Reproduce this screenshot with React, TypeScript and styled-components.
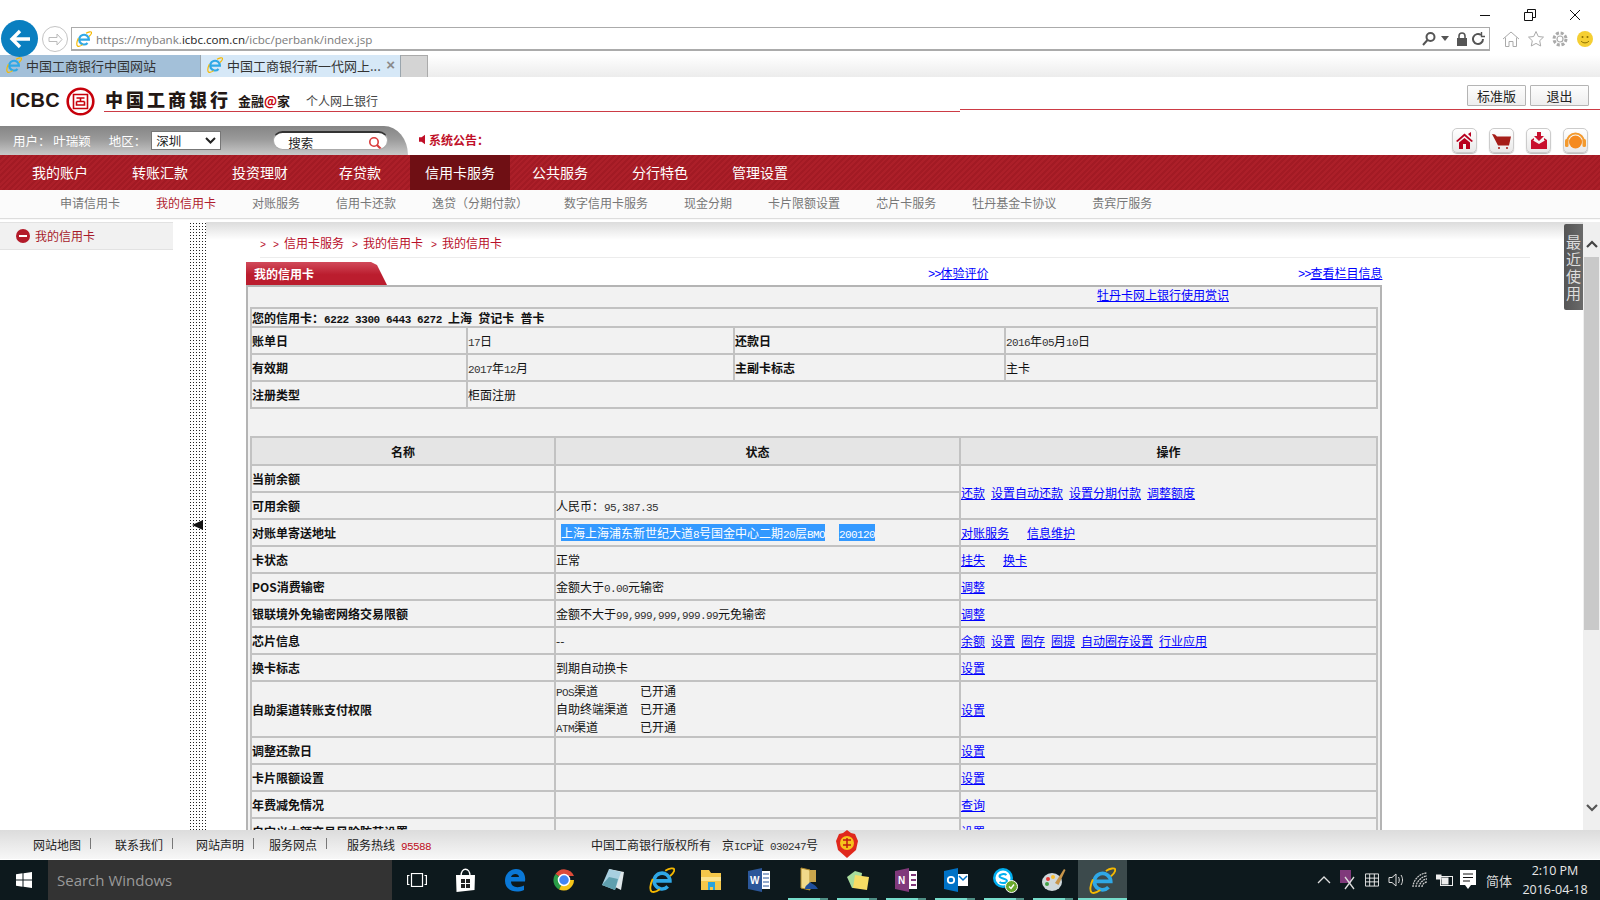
import React from "react";
import styled, { createGlobalStyle } from "styled-components";

const Global = createGlobalStyle`
  html, body { margin: 0; padding: 0; background: #fff; }
  body { font-family: "Noto Sans CJK SC", "Liberation Sans", sans-serif; font-size: 12px; }
  * { box-sizing: border-box; }
`;
const CJK = `"Noto Sans CJK SC", "Liberation Sans", sans-serif`;

const Page = styled.div`width:1600px;height:900px;overflow:hidden;display:flex;flex-direction:column;position:relative;background:#fff;`;

/* browser chrome */
const Chrome = styled.div`height:77px;flex:none;position:relative;background:#fff;`;
const WinControls = styled.div`height:27px;display:flex;justify-content:flex-end;align-items:center;padding:2px 19px 0 0;gap:33px;`;
const AddressRow = styled.div`height:28px;display:flex;align-items:flex-start;`;
const BackBtn = styled.div`position:absolute;left:1px;top:20px;width:37px;height:37px;border-radius:50%;background:#0a7fc0;display:flex;align-items:center;justify-content:center;z-index:2;`;
const FwdBtn = styled.div`width:26px;height:26px;border-radius:50%;border:1px solid #c4c4c4;margin:-1px 3px 0 42px;flex:none;display:flex;align-items:center;justify-content:center;`;
const Address = styled.div`width:1419px;height:24px;border:1px solid #ababab;border-width:1px 1px 2px 1px;display:flex;align-items:center;padding-left:4px;flex:none;position:relative;`;
const Url = styled.span`font:11.6px "Open Sans","Liberation Sans",sans-serif;color:#7b7b7b;margin:2px 0 0 4px;`;
const UrlDark = styled.b`font-weight:400;color:#222;`;
const AddrTools = styled.div`margin-left:auto;display:flex;align-items:center;gap:4px;padding-right:4px;`;
const BrowserTools = styled.div`display:flex;gap:6.5px;margin-left:12px;align-items:center;height:24px;`;
const TabStrip = styled.div`height:22px;display:flex;background:linear-gradient(#fff,#ececec);`;
const Tab = styled.div<{ $active?: boolean }>`width:${p => p.$active ? 200 : 201}px;height:22px;background:${p => p.$active ? "#d6e8f7" : "#a3c0d9"};border-right:1px solid #9aa5ad;display:flex;align-items:center;gap:4px;padding:0 0 2px 6px;font-size:13px;color:#333;position:relative;`;
const TabClose = styled.span`position:absolute;right:5px;top:1px;font:bold 15px "Liberation Sans",sans-serif;color:#8a8a8a;`;
const NewTab = styled.div`width:27px;height:22px;background:#d4d4d4;border-right:1px solid #aaa;border-top:1px solid #aaa;`;

/* site header */
const Header = styled.header`height:49px;flex:none;display:flex;align-items:flex-start;position:relative;padding-left:10px;`;
const IcbcWord = styled.span`font:bold 20px "Liberation Sans",sans-serif;color:#231815;margin-top:12px;letter-spacing:.3px;width:56px;`;
const LogoMark = styled.svg`flex:none;margin-top:10px;`;
const BankName = styled.span`font:900 18px ${CJK};letter-spacing:3px;color:#231815;margin:8px 0 0 10px;line-height:28px;width:133px;white-space:nowrap;`;
const Jinrong = styled.span`font:bold 13px ${CJK};color:#231815;margin:15px 0 0 0;line-height:18px;width:68px;white-space:nowrap;`;
const At = styled.span`color:#c7000b;`;
const Personal = styled.span`font-size:12px;color:#444;margin-top:15px;line-height:18px;`;
const RedLine = styled.div`position:absolute;left:104px;top:34px;width:856px;height:1px;background:#cc3b45;`;
const RedLine2 = styled.div`position:absolute;left:960px;right:0;top:32px;height:1px;background:#cc3b45;`;
const HeadBtns = styled.div`position:absolute;right:11px;top:8px;display:flex;gap:4px;`;
const HeadBtn = styled.div`width:59px;height:21px;border:1px solid #b4b4b4;border-radius:1px;background:linear-gradient(#fdfdfd,#eeeeee);font-size:13px;color:#222;display:flex;align-items:center;justify-content:center;`;

/* user bar */
const UserBar = styled.div`height:29px;flex:none;display:flex;align-items:center;`;
const UserGray = styled.div`width:408px;height:29px;background:linear-gradient(#858585,#9a9a9a 45%,#c8c8c8);border-top-right-radius:24px 29px;display:flex;align-items:center;padding-left:13px;color:#fff;font-size:12.5px;flex:none;`;
const UserText = styled.span<{ $m: number }>`margin-right:${p => p.$m}px;white-space:nowrap;`;
const RegionSelect = styled.div`width:70px;height:19px;background:#fff;border:1px solid #777;color:#222;font-size:12.5px;padding-left:4px;display:flex;align-items:center;justify-content:space-between;padding-right:4px;margin-left:1px;`;
const SearchBox = styled.div`width:115px;height:19px;margin-left:52px;background:#fff;border:1px solid #aaa;border-top:2px solid #333;border-radius:10px;color:#222;font-size:12.5px;padding:3px 5px 0 14px;display:flex;align-items:center;justify-content:space-between;overflow:hidden;`;
const Notice = styled.div`margin-left:11px;padding-bottom:2px;color:#c00f28;font-weight:bold;font-size:12px;display:flex;align-items:center;gap:4px;`;
const UserIcons = styled.div`margin-left:auto;display:flex;gap:12px;padding-right:12px;`;
const IconBtn = styled.div`width:25px;height:25px;border:1px solid #ccc;border-radius:5px;background:linear-gradient(#fff,#e9e9e9);display:flex;align-items:center;justify-content:center;box-shadow:0 1px 1px #bbb;`;

/* nav */
const Nav = styled.nav`height:35px;flex:none;display:flex;padding-left:10px;background:repeating-linear-gradient(135deg,#ac1f29 0 2px,#a21a24 2px 4px);`;
const NavItem = styled.div<{ $active?: boolean }>`width:100px;display:flex;align-items:center;justify-content:center;padding-bottom:2px;color:#fff;font-size:14px;${p => p.$active ? "background:#6f0f14;" : ""}`;
const SubNav = styled.div`height:28px;flex:none;display:flex;gap:36px;padding:0 0 3px 60px;align-items:center;background:#fbfbfb;box-shadow:0 1px 1px #ddd;color:#777;font-size:12px;position:relative;z-index:1;`;
const SubItem = styled.span<{ $active?: boolean }>`color:${p => p.$active ? "#b01c2e" : "#777"};white-space:nowrap;`;

/* body */
const Body = styled.div`flex:1;min-height:0;display:flex;margin-top:4px;position:relative;overflow:hidden;`;
const Sidebar = styled.aside`width:173px;flex:none;`;
const SideItem = styled.div`height:28px;background:#f1f1f1;border-top:1px solid #e2e2e2;border-bottom:1px solid #e2e2e2;display:flex;align-items:center;padding:0 0 1px 16px;gap:5px;color:#a71b2b;font-size:12px;`;
const SideDot = styled.span`width:14px;height:14px;border-radius:50%;background:#b31b2a;display:flex;align-items:center;justify-content:center;&::after{content:"";width:8px;height:2px;background:#fff;}`;
const Divider = styled.div`width:17px;flex:none;margin-left:16px;background-image:radial-gradient(#222 .8px,transparent .9px);background-size:3px 3px;position:relative;`;
const DividerArrow = styled.span`position:absolute;left:3px;top:298px;width:0;height:0;border-style:solid;border-width:5px 11px 5px 0;border-color:transparent #111 transparent transparent;`;
const Content = styled.main`flex:1;min-width:0;position:relative;background:linear-gradient(#dcdcdc,#fff 18px);padding-left:40px;overflow:hidden;`;
const Crumb = styled.div`height:36px;margin-left:14px;width:1270px;padding-top:13px;line-height:16px;color:#b8102a;font-size:12px;border-bottom:1px solid #ececec;white-space:nowrap;`;
const CrumbSep = styled.span`font:10px "Liberation Mono",monospace;margin-right:5px;&:not(:first-child){margin-left:8px;}&:nth-child(2){margin-left:2px;}`;
const TitleRow = styled.div`height:27px;width:1136px;position:relative;display:flex;align-items:flex-end;`;
const TitleTab = styled.div`width:141px;height:23px;background:linear-gradient(#d14a5a,#bb1d2e 55%,#bb1d2e);clip-path:polygon(0 0,125px 0,131px 3px,141px 23px,0 23px);color:#fff;font-weight:bold;font-size:12px;line-height:23px;padding-left:8px;flex:none;`;
const TopLink = styled.a<{ $x: number }>`color:#00f;text-decoration:none;font-size:12px;position:absolute;bottom:3px;left:${p => p.$x}px;white-space:nowrap;&>u{text-decoration:underline;}`;
const Arrow2 = styled.span`font-family:"Liberation Mono",monospace;letter-spacing:-1px;`;
const Panel = styled.section`width:1136px;height:700px;background:#f2f2f2;border:solid #b4b4b4;border-width:2px 2px 0 2px;padding:0 2px;`;
const HelpLine = styled.div`height:20px;padding-left:847px;line-height:16px;font-size:12px;`;
const Lnk = styled.a<{ $m?: number }>`color:#00f;text-decoration:underline;white-space:nowrap;margin-right:${p => p.$m ?? 6}px;`;
const Grid = styled.table`width:1128px;border-collapse:collapse;table-layout:fixed;font-size:12px;color:#111;border:2px solid #c2c2c2;`;
const GridB = styled(Grid)`margin-top:27px;`;
const Tr = styled.tr<{ $h?: number }>`height:${p => p.$h ?? 27}px;`;
const Td = styled.td`border:1px solid #c2c2c2;border-width:1px 2px 2px 1px;padding:0;white-space:nowrap;line-height:15px;overflow:hidden;`;
const Th = styled.td`border:1px solid #c2c2c2;border-width:1px 2px 2px 1px;padding:0;background:#e5e5e5;text-align:center;font-weight:bold;`;
const Label = styled(Td)`font-weight:bold;`;
const Num = styled.span`font:11px "Liberation Mono",monospace;letter-spacing:-.6px;color:#333;`;
const BNum = styled.span`font:bold 11px "Liberation Mono",monospace;letter-spacing:-.4px;`;
const Selected = styled.span<{ $m: number }>`background:#3399ff;color:#fff;margin-left:${p => p.$m}px;`;
const SelNum = styled(Num)`color:#fff;`;
const Chan = styled.div`display:grid;grid-template-columns:84px auto;line-height:18px;height:18px;`;

const Recent = styled.div`position:absolute;right:17px;top:2px;width:19px;height:86px;background:linear-gradient(90deg,#555,#6a6a6a);color:#ddd;font-size:15px;line-height:17px;text-align:center;padding-top:9px;border-radius:2px 0 0 2px;`;
const Scroll = styled.div`position:absolute;right:0;top:0;bottom:0;width:17px;background:#efefef;`;
const Thumb = styled.div`position:absolute;left:1px;right:1px;top:35px;height:373px;background:#c9c9c9;`;
const ScrollArrow = styled.svg<{ $bottom?: boolean }>`position:absolute;left:3px;${p => p.$bottom ? "bottom:18px" : "top:18px"};`;

/* footer */
const Footer = styled.footer`height:30px;flex:none;display:flex;align-items:center;background:linear-gradient(#dcdcdc,#f7f7f7);font-size:12px;color:#222;position:relative;z-index:2;padding-left:33px;border-bottom:1px solid #fff;`;
const FootCell = styled.span<{ $w: number; $sep?: boolean }>`width:${p => p.$w}px;flex:none;position:relative;white-space:nowrap;${p => p.$sep ? `&::after{content:"";position:absolute;left:57px;top:2px;width:1px;height:11px;background:#777;}` : ""}`;
const Hot = styled.span`color:#c00f1e;font:11px "Liberation Mono",monospace;letter-spacing:-.6px;margin-left:6px;`;
const Badge = styled.svg`margin-left:17px;margin-top:-1px;`;

/* taskbar */
const Taskbar = styled.div`height:40px;flex:none;background:#0d191d;display:flex;align-items:stretch;position:relative;`;
const Start = styled.div`width:48px;display:flex;align-items:center;justify-content:center;flex:none;`;
const SearchW = styled.div`width:344px;background:#333;color:#9a9a9a;font:15px "Open Sans","Liberation Sans",sans-serif;display:flex;align-items:center;padding-left:9px;flex:none;`;
const TaskIcons = styled.div`display:flex;flex:none;`;
const TaskIcon = styled.div<{ $run?: boolean; $active?: boolean }>`width:49px;display:flex;align-items:center;justify-content:center;position:relative;
  ${p => p.$active ? "background:#3c4a4c;" : ""}
  ${p => p.$run ? `&::after{content:"";position:absolute;left:${p.$active ? 0 : 4}px;right:${p.$active ? 0 : 5}px;bottom:0;height:2px;background:${p.$active ? "#76dccb" : "linear-gradient(90deg,#76dccb 80%,#4f8f85 80%)"};}` : ""}`;
const Tray = styled.div`position:absolute;right:13px;top:0;bottom:0;display:flex;align-items:center;color:#eee;`;
const TrayItem = styled.span<{ $w: number }>`width:${p => p.$w}px;display:flex;justify-content:center;align-items:center;flex:none;`;
const Lang = styled.span`font-size:13px;color:#ddd;width:38px;text-align:center;`;
const Clock = styled.div`display:flex;flex-direction:column;align-items:center;font:12.5px "Open Sans","Liberation Sans",sans-serif;line-height:19px;color:#e8e8e8;width:64px;margin-left:5px;white-space:nowrap;`;

const IE = ({ s = 16 }: { s?: number }) => (
  <svg width={s} height={s} viewBox="0 0 24 24" style={{ flex: "none" }}>
    <path d="M5.200 12.800H19.300A7.300 7.300 0 1 0 17.300 18" fill="none" stroke="#2fa8e6" strokeWidth="3.300" />
    <path d="M15 3.500C19 1 23 .5 23.300 2.300 23.600 4 21 7 19.500 8.300M3.500 11C1 16 .4 21.500 2.500 22.700 4.500 23.600 8 22 10 20.500" fill="none" stroke="#f5b800" strokeWidth="1.700" />
  </svg>
);

const IconLetter = styled.text`font:bold 10px "Liberation Sans",sans-serif;fill:#fff;`;

const rows: [string, React.ReactNode, React.ReactNode][] = [
  ["对账单寄送地址", <><Selected $m={5}>上海上海浦东新世纪大道<SelNum>8</SelNum>号国金中心二期<SelNum>20</SelNum>层<SelNum>BMO</SelNum></Selected><Selected $m={14}><SelNum>200120</SelNum></Selected></>, <><Lnk $m={18}>对账服务</Lnk><Lnk>信息维护</Lnk></>],
  ["卡状态", "正常", <><Lnk $m={18}>挂失</Lnk><Lnk>换卡</Lnk></>],
  ["POS消费输密", <>金额大于<Num>0.00</Num>元输密</>, <Lnk>调整</Lnk>],
  ["银联境外免输密网络交易限额", <>金额不大于<Num>99,999,999,999.99</Num>元免输密</>, <Lnk>调整</Lnk>],
  ["芯片信息", "--", <><Lnk>余额</Lnk><Lnk>设置</Lnk><Lnk>圈存</Lnk><Lnk>圈提</Lnk><Lnk>自动圈存设置</Lnk><Lnk>行业应用</Lnk></>],
  ["换卡标志", "到期自动换卡", <Lnk>设置</Lnk>],
];

export default function App() {
  return (
    <Page>
      <Global />
      <Chrome>
        <WinControls>
          <svg width="12" height="12" viewBox="0 0 12 12"><path d="M1 6.500h10" stroke="#111" /></svg>
          <svg width="12" height="12" viewBox="0 0 12 12" fill="none" stroke="#111"><path d="M.5 3.500h8v8h-8zM3.500 3V.5h8v8H9" /></svg>
          <svg width="12" height="12" viewBox="0 0 12 12" stroke="#111"><path d="M1 1l10 10M11 1L1 11" /></svg>
        </WinControls>
        <BackBtn>
          <svg width="22" height="20" viewBox="0 0 22 20" fill="none" stroke="#fff" strokeWidth="3.400"><path d="M21 10H4M11 2l-8 8 8 8" /></svg>
        </BackBtn>
        <AddressRow>
          <FwdBtn><svg width="15" height="13" viewBox="0 0 15 13" fill="none" stroke="#bbb"><path d="M1 4.500h8V1l5 5.500-5 5.500V8.500H1z" /></svg></FwdBtn>
          <Address>
            <IE />
            <Url>https://<span>mybank.</span><UrlDark>icbc.com.cn</UrlDark>/icbc/perbank/index.jsp</Url>
            <AddrTools>
              <svg width="16" height="16" viewBox="0 0 16 16" fill="none" stroke="#555" strokeWidth="2"><circle cx="9.500" cy="6" r="4" /><path d="M6.500 9L2 14" /></svg>
              <svg width="8" height="5" viewBox="0 0 8 5"><path d="M0 0h8L4 5z" fill="#555" /></svg>
              <svg width="12" height="14" viewBox="0 0 12 14" style={{ marginLeft: 3 }}><path d="M3 6V4a3 3 0 016 0v2" fill="none" stroke="#555" strokeWidth="1.600" /><rect x="1" y="6" width="10" height="8" fill="#555" /></svg>
              <svg width="13" height="14" viewBox="0 0 13 14" fill="none" stroke="#555" strokeWidth="2"><path d="M11 7a5 5 0 11-2-4" /><path d="M9.500 0v4.500H13" strokeWidth="1.400" /></svg>
            </AddrTools>
          </Address>
          <BrowserTools>
            <svg width="18" height="18" viewBox="0 0 18 18" fill="none" stroke="#aaa"><path d="M1 9l8-7 8 7M3.500 7.500V16.500H7v-5h4v5h3.500V7.500" /></svg>
            <svg width="18" height="18" viewBox="0 0 18 18" fill="none" stroke="#aaa"><path d="M9 1.500l2.300 5 5.200.6-3.800 3.600 1 5.300L9 13.400l-4.700 2.600 1-5.300L1.500 7.100l5.200-.6z" /></svg>
            <svg width="18" height="18" viewBox="0 0 18 18" fill="none" stroke="#aaa" strokeWidth="1.200"><circle cx="9" cy="9" r="3" /><circle cx="9" cy="9" r="6" strokeDasharray="3 1.700" strokeWidth="3" /></svg>
            <svg width="18" height="18" viewBox="0 0 18 18"><circle cx="9" cy="9" r="8" fill="#f5cf33" /><circle cx="6.500" cy="7" r="1" fill="#8a6d00" /><circle cx="11.500" cy="7" r="1" fill="#8a6d00" /><path d="M5 11c2 2.500 6 2.500 8 0" fill="none" stroke="#8a6d00" /></svg>
          </BrowserTools>
        </AddressRow>
        <TabStrip>
          <Tab><IE />中国工商银行中国网站</Tab>
          <Tab $active><IE />中国工商银行新一代网上...<TabClose>×</TabClose></Tab>
          <NewTab />
        </TabStrip>
      </Chrome>

      <Header>
        <IcbcWord>ICBC</IcbcWord>
        <LogoMark width="29" height="29" viewBox="0 0 29 29">
          <circle cx="14.500" cy="14.500" r="12.800" fill="none" stroke="#c7000b" strokeWidth="2.600" />
          <path d="M7.500 7.500h14v14h-14zM10.500 11h8M14.500 11v3M10.500 14.500h8M10.500 14.500v3.500h8v-3.500" fill="none" stroke="#c7000b" strokeWidth="1.600" />
        </LogoMark>
        <BankName>中国工商银行</BankName>
        <Jinrong>金融<At>@</At>家</Jinrong>
        <Personal>个人网上银行</Personal>
        <RedLine /><RedLine2 />
        <HeadBtns><HeadBtn>标准版</HeadBtn><HeadBtn>退出</HeadBtn></HeadBtns>
      </Header>

      <UserBar>
        <UserGray>
          <UserText $m={18}>用户： 叶瑞颖</UserText>
          <UserText $m={4}>地区：</UserText>
          <RegionSelect>深圳<svg width="11" height="7" viewBox="0 0 11 7" fill="none" stroke="#222" strokeWidth="2"><path d="M1 1l4.500 4.500L10 1" /></svg></RegionSelect>
          <SearchBox>搜索<svg width="14" height="14" viewBox="0 0 14 14" fill="none" stroke="#d83a3a" strokeWidth="1.600"><circle cx="6" cy="6" r="4.200" /><path d="M9 9l4 4" strokeWidth="2.200" /></svg></SearchBox>
        </UserGray>
        <Notice><svg width="6" height="11" viewBox="0 0 7 11"><path d="M0 3h3l4-3v11L3 8H0z" fill="#c00f28" /></svg>系统公告：</Notice>
        <UserIcons>
          <IconBtn><svg width="19" height="18" viewBox="0 0 19 18"><path d="M1 9l8.500-7.500L18 9l-1.500 1-7-6-7 6zM4 10.500l5.500-4.500 5.500 4.500V17h-4v-5H8v5H4z" fill="#b8001f" /><path d="M13 2l3-2v5z" fill="#b8001f" /></svg></IconBtn>
          <IconBtn><svg width="19" height="16" viewBox="0 0 19 16"><path d="M0 1l3 .5 2 2h14l-2 9H6z" fill="#a51d18" /><circle cx="7" cy="15" r="1" fill="#a51d18" /><circle cx="15" cy="15" r="1" fill="#a51d18" /></svg></IconBtn>
          <IconBtn><svg width="18" height="18" viewBox="0 0 18 18"><path d="M7 0h4v4h3l-5 5-5-5h3z" fill="#c8102e" /><path d="M1 8l3-2v2L3 8.500 9 12l6-3.500L14 8V6l3 2v9H1z" fill="#c8102e" /></svg></IconBtn>
          <IconBtn><svg width="21" height="19" viewBox="0 0 21 19"><path d="M2 11a8.500 8.500 0 0117 0" fill="none" stroke="#f39a2e" strokeWidth="2" /><circle cx="10.500" cy="11" r="6.500" fill="#f58a1f" /><rect y="8" width="3.500" height="8" rx="1.500" fill="#f39a2e" /><rect x="17.500" y="8" width="3.500" height="8" rx="1.500" fill="#f39a2e" /></svg></IconBtn>
        </UserIcons>
      </UserBar>

      <Nav>
        {["我的账户", "转账汇款", "投资理财", "存贷款", "信用卡服务", "公共服务", "分行特色", "管理设置"].map((t, i) => (
          <NavItem key={t} $active={i === 4}>{t}</NavItem>
        ))}
      </Nav>
      <SubNav>
        {["申请信用卡", "我的信用卡", "对账服务", "信用卡还款", "逸贷（分期付款）", "数字信用卡服务", "现金分期", "卡片限额设置", "芯片卡服务", "牡丹基金卡协议", "贵宾厅服务"].map((t, i) => (
          <SubItem key={t} $active={i === 1}>{t}</SubItem>
        ))}
      </SubNav>

      <Body>
        <Sidebar>
          <SideItem><SideDot />我的信用卡</SideItem>
        </Sidebar>
        <Divider><DividerArrow /></Divider>
        <Content>
          <Crumb>
            <CrumbSep>&gt;</CrumbSep><CrumbSep>&gt;</CrumbSep>信用卡服务<CrumbSep>&gt;</CrumbSep>我的信用卡<CrumbSep>&gt;</CrumbSep>我的信用卡
          </Crumb>
          <TitleRow>
            <TitleTab>我的信用卡</TitleTab>
            <TopLink $x={682}><Arrow2>&gt;&gt;</Arrow2><u>体验评价</u></TopLink>
            <TopLink $x={1052}><Arrow2>&gt;&gt;</Arrow2><u>查看栏目信息</u></TopLink>
          </TitleRow>
          <Panel>
            <HelpLine><Lnk>牡丹卡网上银行使用赏识</Lnk></HelpLine>
            <Grid>
              <colgroup><col style={{ width: 216 }} /><col style={{ width: 267 }} /><col style={{ width: 271 }} /><col /></colgroup>
              <tbody>
                <Tr $h={19}><Label colSpan={4}>您的信用卡：<BNum>6222 3300 6443 6272&nbsp;</BNum>上海<BNum>&nbsp;</BNum>贷记卡<BNum>&nbsp;</BNum>普卡</Label></Tr>
                <Tr><Label>账单日</Label><Td><Num>17</Num>日</Td><Label>还款日</Label><Td><Num>2016</Num>年<Num>05</Num>月<Num>10</Num>日</Td></Tr>
                <Tr><Label>有效期</Label><Td><Num>2017</Num>年<Num>12</Num>月</Td><Label>主副卡标志</Label><Td>主卡</Td></Tr>
                <Tr><Label>注册类型</Label><Td colSpan={3}>柜面注册</Td></Tr>
              </tbody>
            </Grid>
            <GridB>
              <colgroup><col style={{ width: 304 }} /><col style={{ width: 405 }} /><col /></colgroup>
              <tbody>
                <Tr $h={28}><Th>名称</Th><Th>状态</Th><Th>操作</Th></Tr>
                <Tr><Label>当前余额</Label><Td /><Td rowSpan={2}><Lnk>还款</Lnk><Lnk>设置自动还款</Lnk><Lnk>设置分期付款</Lnk><Lnk>调整额度</Lnk></Td></Tr>
                <Tr><Label>可用余额</Label><Td>人民币：<Num>95,387.35</Num></Td></Tr>
                {rows.map(([a, b, c]) => (
                  <Tr key={a}><Label>{a}</Label><Td>{b}</Td><Td>{c}</Td></Tr>
                ))}
                <Tr $h={55}>
                  <Label>自助渠道转账支付权限</Label>
                  <Td>
                    <Chan><span><Num>POS</Num>渠道</span><span>已开通</span></Chan>
                    <Chan><span>自助终端渠道</span><span>已开通</span></Chan>
                    <Chan><span><Num>ATM</Num>渠道</span><span>已开通</span></Chan>
                  </Td>
                  <Td><Lnk>设置</Lnk></Td>
                </Tr>
                <Tr><Label>调整还款日</Label><Td /><Td><Lnk>设置</Lnk></Td></Tr>
                <Tr><Label>卡片限额设置</Label><Td /><Td><Lnk>设置</Lnk></Td></Tr>
                <Tr><Label>年费减免情况</Label><Td /><Td><Lnk>查询</Lnk></Td></Tr>
                <Tr><Label>自定义大额交易风险防范设置</Label><Td /><Td><Lnk>设置</Lnk></Td></Tr>
              </tbody>
            </GridB>
          </Panel>
        </Content>
        <Recent>最近使用</Recent>
        <Scroll>
          <Thumb />
          <ScrollArrow width="12" height="8" viewBox="0 0 12 8" fill="none" stroke="#444" strokeWidth="2.200"><path d="M1 7l5-5 5 5" /></ScrollArrow>
          <ScrollArrow $bottom width="12" height="8" viewBox="0 0 12 8" fill="none" stroke="#555" strokeWidth="2.200"><path d="M1 1l5 5 5-5" /></ScrollArrow>
        </Scroll>
      </Body>

      <Footer>
        <FootCell $w={82} $sep>网站地图</FootCell>
        <FootCell $w={81} $sep>联系我们</FootCell>
        <FootCell $w={73} $sep>网站声明</FootCell>
        <FootCell $w={78} $sep>服务网点</FootCell>
        <FootCell $w={244}>服务热线<Hot>95588</Hot></FootCell>
        <FootCell $w={131}>中国工商银行版权所有</FootCell>
        <span>京<Num>ICP</Num>证<Num>&nbsp;030247</Num>号</span>
        <Badge width="24" height="28" viewBox="0 0 24 28"><path d="M12 0l4 3 4 1 3 7-2 9-9 8-9-8-2-9 3-7 4-1z" fill="#e0281c" /><circle cx="12" cy="13" r="7" fill="#f6c21c" /><path d="M8 10h8M12 8v10M8 15h8" stroke="#c01a10" strokeWidth="1.500" /></Badge>
      </Footer>

      <Taskbar>
        <Start><svg width="16" height="16" viewBox="0 0 16 16" fill="#fff"><path d="M0 2.200l6.500-.9v6.200H0zM7.500 1.200L16 0v7.500H7.500zM0 8.500h6.500v6.200L0 13.800zM7.500 8.500H16V16l-8.500-1.200z" /></svg></Start>
        <SearchW>Search Windows</SearchW>
        <TaskIcons>
          <TaskIcon><svg width="20" height="14" viewBox="0 0 20 14" fill="none" stroke="#fff" strokeWidth="1.200"><rect x="4.500" y=".5" width="11" height="13" /><path d="M2.500 2.500H.6v9h1.900M17.500 2.500h1.900v9h-1.900" /></svg></TaskIcon>
          <TaskIcon><svg width="21" height="24" viewBox="0 0 21 24"><path d="M1 7h19l-.5 15L1.500 24z" fill="#fff" /><path d="M6 8c0-9 9-9 9 0" fill="none" stroke="#fff" strokeWidth="1.400" /><path d="M6 11h4v4H6zM11 11h4v4h-4zM6 16h4v4H6zM11 16h4v4h-4z" fill="#222" /></svg></TaskIcon>
          <TaskIcon><svg width="22" height="24" viewBox="0 0 22 24"><path d="M21 13.500H7c0 6 7 7 13 4v4.500c-9 4-19 0-19-9C1 4 8 1 12 1c7 0 10 6 9 12.500zM7 9h8c0-4-7-4-8 0z" fill="#0a78d7" /></svg></TaskIcon>
          <TaskIcon><svg width="24" height="24" viewBox="0 0 24 24"><path d="M12 12L3.500 6A10.500 10.500 0 0122 8H12z" fill="#dd4b39" /><path d="M12 12l-5 9.500A10.500 10.500 0 013.500 6z" fill="#2a9d47" /><path d="M12 12h10a10.500 10.500 0 01-15 9.500z" fill="#f5c518" /><circle cx="12" cy="12" r="5.500" fill="#4285f4" stroke="#fff" strokeWidth="1.500" /></svg></TaskIcon>
          <TaskIcon><svg width="24" height="24" viewBox="0 0 24 24"><path d="M8 1l15 3-3 18-6-3z" fill="#dfe7ea" /><path d="M8 1L1 17l13 5 6-18z" fill="#a8cfe0" /><path d="M1 17l7-8 9 2-3 11z" fill="#5f9fae" /></svg></TaskIcon>
          <TaskIcon><IE s={26} /></TaskIcon>
          <TaskIcon><svg width="22" height="24" viewBox="0 0 22 24"><path d="M1 2h8l2 3h10v17H1z" fill="#f4c74a" /><path d="M1 9h20v4H1z" fill="#fbe38e" /><path d="M8 14h7v8h-2v-3h-3v3H8z" fill="#2aa3dd" /></svg></TaskIcon>
          <TaskIcon><svg width="23" height="24" viewBox="0 0 23 24"><path d="M8 3h14v18H8z" fill="#fff" /><path d="M0 3l14-3v24L0 21z" fill="#2b579a" /><path d="M15 6h6M15 10h6M15 14h6M15 18h6" stroke="#2b579a" /><IconLetter x="2" y="16">W</IconLetter></svg></TaskIcon>
          <TaskIcon $run><svg width="20" height="26" viewBox="0 0 20 26"><path d="M2 1l9 2v20l-9-2z" fill="#f1d98a" stroke="#b08a2c" /><path d="M11 3h6v12h-6z" fill="#c9a54c" /><path d="M6 22c0-4 3-4 5-7 2 2 6 3 8 7z" fill="#1f4e9c" /></svg></TaskIcon>
          <TaskIcon $run><svg width="24" height="22" viewBox="0 0 24 22"><path d="M1 8l8-6 7 2-2 14-8 1z" fill="#a8dc9c" /><path d="M9 6l14 2-2 13-14-2z" fill="#f6dc64" /></svg></TaskIcon>
          <TaskIcon $run><svg width="24" height="24" viewBox="0 0 24 24"><path d="M9 3h13v18H9z" fill="#fff" /><path d="M0 3l14-3v24L0 21z" fill="#80397b" /><path d="M16 7h5M16 12h5M16 17h5" stroke="#80397b" strokeWidth="2" /><IconLetter x="3" y="16">N</IconLetter></svg></TaskIcon>
          <TaskIcon $run><svg width="24" height="24" viewBox="0 0 24 24"><path d="M11 6h13v12H11z" fill="#fff" /><path d="M0 3l14-3v24L0 21z" fill="#0072c6" /><circle cx="7" cy="12" r="3.200" fill="none" stroke="#fff" strokeWidth="1.800" /><path d="M15 8l4 4 4-4" fill="none" stroke="#0072c6" strokeWidth="1.500" /></svg></TaskIcon>
          <TaskIcon $run><svg width="26" height="26" viewBox="0 0 26 26"><circle cx="11" cy="11" r="10" fill="#00aff0" /><circle cx="11" cy="11" r="7.500" fill="#fff" /><path d="M14.500 8c-2-1.500-7-1-7 1.200 0 2.800 7.500 1.600 7.500 4.800 0 2.300-5 2.600-7.500 1" fill="none" stroke="#00aff0" strokeWidth="2" /><circle cx="19.500" cy="19.500" r="6" fill="#6aa82b" stroke="#fff" /><path d="M17 19.500l2 2 3-4" fill="none" stroke="#fff" strokeWidth="1.400" /></svg></TaskIcon>
          <TaskIcon $run><svg width="24" height="24" viewBox="0 0 24 24"><ellipse cx="10" cy="14" rx="10" ry="9" fill="#cfd8dc" /><circle cx="6" cy="11" r="2" fill="#e53935" /><circle cx="11" cy="9" r="2" fill="#fbc02d" /><circle cx="5" cy="16" r="2" fill="#43a047" /><path d="M13 15L22 1l1.500 1-7 15z" fill="#c8954a" /></svg></TaskIcon>
          <TaskIcon $run $active><IE s={27} /></TaskIcon>
        </TaskIcons>
        <Tray>
          <TrayItem $w={24}><svg width="14" height="8" viewBox="0 0 14 8" fill="none" stroke="#ddd" strokeWidth="1.300"><path d="M1 7l6-6 6 6" /></svg></TrayItem>
          <TrayItem $w={24}><svg width="16" height="20" viewBox="0 0 16 20"><rect width="11" height="13" fill="#80397b" /><path d="M5 7l9 12M14 7L5 19" stroke="#ddd" strokeWidth="1.300" /></svg></TrayItem>
          <TrayItem $w={24}><svg width="14" height="16" viewBox="0 0 15 16" fill="none" stroke="#eee"><path d="M.5 1.500h14v13H.5zM.5 6h14M.5 10h14M5 1.500v13M10 1.500v13" /></svg></TrayItem>
          <TrayItem $w={24}><svg width="16" height="16" viewBox="0 0 16 16" fill="none" stroke="#ddd"><path d="M1 5.500h3L8 2v12L4 10.500H1z" /><path d="M10.500 5c1 2 1 4 0 6M13 3c2 3 2 7 0 10" /></svg></TrayItem>
          <TrayItem $w={24}><svg width="16" height="16" viewBox="0 0 16 16" fill="none" stroke="#ccc" strokeWidth="1.300"><path d="M1 15C1 8 8 1 15 1M4 15c0-5 6-11 11-11M7 15c0-3 4-8 8-8M10 15c0-2 2-5 5-5" strokeDasharray="2 .7" /></svg></TrayItem>
          <TrayItem $w={24}><svg width="17" height="12" viewBox="0 0 17 12" fill="none" stroke="#eee"><rect x="4.500" y="2.500" width="12" height="9" /><rect x="0" y="1" width="5" height="4" fill="#eee" /><rect x="6" y="4" width="6" height="6" fill="#eee" /></svg></TrayItem>
          <TrayItem $w={24}><svg width="16" height="20" viewBox="0 0 16 20"><path d="M0 0h16v15h-5l-3 4-3-4H0z" fill="#fff" /><path d="M3 4h10M3 7.500h10M3 11h7" stroke="#111" /></svg></TrayItem>
          <Lang>简体</Lang>
          <Clock><span>2:10 PM</span><span>2016-04-18</span></Clock>
        </Tray>
      </Taskbar>
    </Page>
  );
}
